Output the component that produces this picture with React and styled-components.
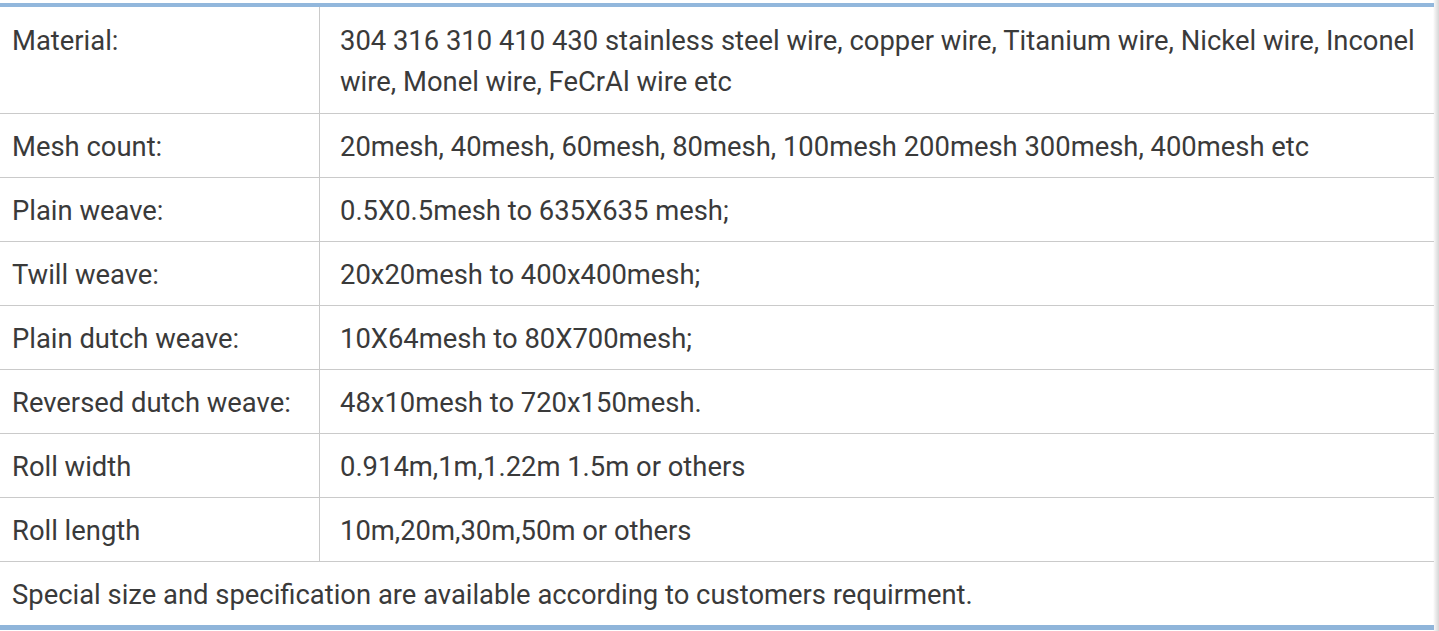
import React from "react";
import styled, { createGlobalStyle } from "styled-components";

const GlobalStyle = createGlobalStyle`
  html, body {
    margin: 0;
    padding: 0;
    background: linear-gradient(to right, #ffffff 1433px, #f0f0f0 1435px, #d6d6d6 1439px);
    font-family: Roboto, "Liberation Sans", Arial, sans-serif;
  }
`;

const rows = [
  [
    "Material:",
    "304 316 310 410 430 stainless steel wire, copper wire, Titanium wire, Nickel wire, Inconel wire, Monel wire, FeCrAl wire etc",
  ],
  [
    "Mesh count:",
    "20mesh, 40mesh, 60mesh, 80mesh, 100mesh 200mesh 300mesh, 400mesh etc",
  ],
  ["Plain weave:", "0.5X0.5mesh to 635X635 mesh;"],
  ["Twill weave:", "20x20mesh to 400x400mesh;"],
  ["Plain dutch weave:", "10X64mesh to 80X700mesh;"],
  ["Reversed dutch weave:", "48x10mesh to 720x150mesh."],
  ["Roll width", "0.914m,1m,1.22m 1.5m or others"],
  ["Roll length", "10m,20m,30m,50m or others"],
];

const Wrap = styled.div`
  width: 1434px;
  padding-top: 3px;
`;

const Table = styled.table`
  width: 100%;
  border-collapse: collapse;
  border-top: 4px solid #92b7dc;
  border-bottom: 5px solid #8fb5da;
  table-layout: fixed;
  color: #3a3a3a;
  font-size: 27.4px;
  line-height: 41px;
`;

// label cell vs value cell
const Cell = styled.td`
  padding: 13px 12px 9px ${(p) => (p.$label ? "12px" : "20px")};
  width: ${(p) => (p.$label ? "295px" : "auto")};
  border-bottom: 1px solid #cacaca;
  border-right: ${(p) => (p.$label ? "1px solid #cacaca" : "none")};
  vertical-align: top;
  font-weight: 400;
`;

const FirstRow = styled.tr`
  td {
    padding-top: 14px;
    padding-bottom: 10px;
  }
`;

const Note = styled.td`
  padding: 13px 12px 9px;
  border-bottom: 1px solid #cfcfcf;
`;

export default function App() {
  return (
    <>
      <GlobalStyle />
      <Wrap>
        <Table>
          <tbody>
            {rows.map(([label, value], i) => {
              const Row = i === 0 ? FirstRow : "tr";
              return (
                <Row key={label}>
                  <Cell $label>{label}</Cell>
                  <Cell>{value}</Cell>
                </Row>
              );
            })}
            <tr>
              <Note colSpan={2}>
                Special size and specification are available according to
                customers requirment.
              </Note>
            </tr>
          </tbody>
        </Table>
      </Wrap>
    </>
  );
}
